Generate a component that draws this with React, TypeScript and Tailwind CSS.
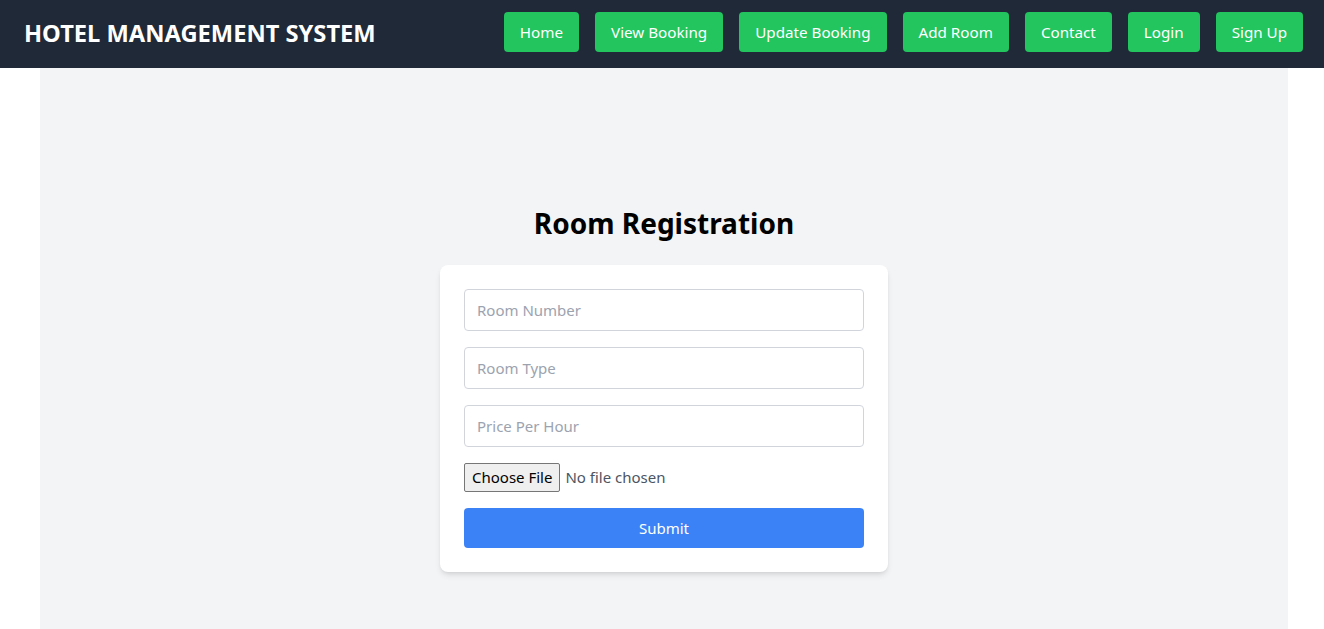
const links = ["Home", "View Booking", "Update Booking", "Add Room", "Contact", "Login", "Sign Up"];

function Navbar() {
  return (
    <nav className="h-[68px] bg-[#1f2937] pl-6 pr-[21px] flex items-center justify-between">
      <h1 className="text-[23.7px] font-bold text-white">HOTEL MANAGEMENT SYSTEM</h1>
      <div className="flex gap-4 -mt-1">
        {links.map((l) => (
          <a key={l} href="#" className="bg-[#22c55e] text-white px-4 py-2 rounded leading-6 text-[15.2px]">
            {l}
          </a>
        ))}
      </div>
    </nav>
  );
}

function RoomForm() {
  return (
    <main className="ml-10 w-[1248px] bg-[#f3f4f6] h-[561px] flex flex-col items-center pt-[137px]">
      <h2 className="text-[28px] leading-9 font-bold text-black mb-6">Room Registration</h2>
      <form className="w-[448px] bg-white rounded-lg shadow-md p-6" onSubmit={(e) => e.preventDefault()}>
        <input type="text" placeholder="Room Number" className="block w-full border border-[#d1d5db] rounded px-3 py-2 mb-4 placeholder-[#9ca3af] text-[15px] leading-6" />
        <input type="text" placeholder="Room Type" className="block w-full border border-[#d1d5db] rounded px-3 py-2 mb-4 placeholder-[#9ca3af] text-[15px] leading-6" />
        <input type="text" placeholder="Price Per Hour" className="block w-full border border-[#d1d5db] rounded px-3 py-2 mb-4 placeholder-[#9ca3af] text-[15px] leading-6" />
        <input type="file" className="block mb-4 text-[#4b5563] text-[15px] file:text-black file:bg-[#efefef] file:border file:border-[#767676] file:rounded-[2px] file:px-[7px] file:py-[2px] file:mr-[5px]" />
        <button type="submit" className="w-full bg-[#3b82f6] text-white rounded py-2 leading-6 text-[15px]">
          Submit
        </button>
      </form>
    </main>
  );
}

export default function App() {
  return (
    <div className="min-h-screen bg-white" style={{ fontFamily: '"Noto Sans", "Open Sans", sans-serif' }}>
      <Navbar />
      <RoomForm />
    </div>
  );
}
